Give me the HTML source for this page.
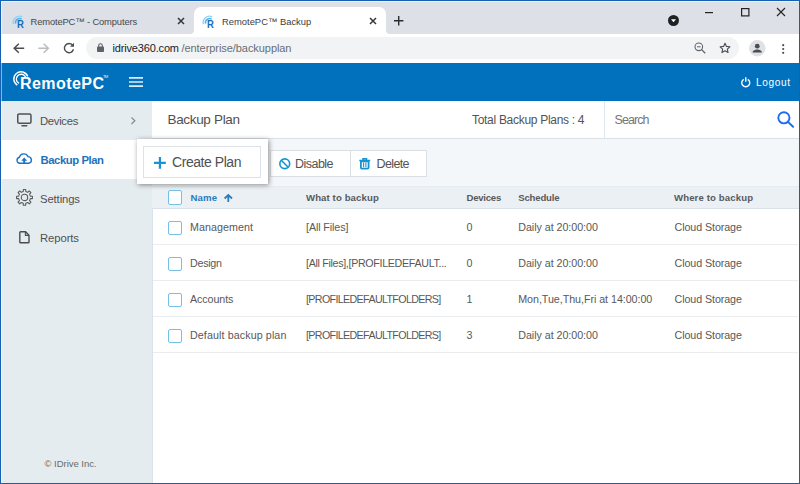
<!DOCTYPE html>
<html lang="en">
<head>
<meta charset="utf-8">
<title>RemotePC Backup</title>
<style>
*{box-sizing:border-box;margin:0;padding:0}
html,body{width:800px;height:484px;overflow:hidden;background:#fff}
body{font-family:"Liberation Sans",sans-serif;color:#333;position:relative}
.abs{position:absolute}
svg{position:absolute;overflow:visible}
.t{position:absolute;white-space:nowrap;line-height:1}
#frame{position:absolute;left:0;top:0;width:800px;height:484px;border:1px solid #1560b1;box-shadow:inset 1px 1px 0 rgba(255,255,255,.5);z-index:50;pointer-events:none}
#tabbar{left:0;top:0;width:800px;height:34px;background:#dde0e7}
#tab2{left:193.5px;top:7px;width:192.5px;height:27px;background:#fff;border-radius:7px 7px 0 0}
#toolbar{left:0;top:33.5px;width:800px;height:29px;background:#fff}
#pill{left:86px;top:37px;width:653px;height:22px;border-radius:11px;background:#f1f3f4}
#hdr{left:0;top:62.5px;width:800px;height:38px;background:#0171be}
#side{left:0;top:100.5px;width:152.5px;height:384px;background:#e5ecf0;border-right:1px solid #dae3ea}
#sel{left:0;top:139.5px;width:152px;height:39.5px;background:#fff}
#titlerow{left:152px;top:100.5px;width:648px;height:38px;background:#fff;border-bottom:1px solid #d9e0e7}
#actrow{left:152px;top:138.5px;width:648px;height:48px;background:#f4f7fa}
#thead{left:152px;top:186px;width:648px;height:22.5px;background:#ebf0f5;border-top:1px solid #e6ecf1;border-bottom:1px solid #d9e2ea}
.row{left:153px;width:645px;height:1px;background:#e9edf0}
.cb{position:absolute;left:168px;width:14px;height:14px;border:1px solid #76c0e6;border-radius:2px;background:#fff}
.btn{position:absolute;border:1px solid #d9dfe5;background:#fff}
</style>
</head>
<body>
<!-- browser chrome -->
<div class="abs" id="tabbar"></div>
<div class="abs" id="tab2"></div>
<svg style="left:189.5px;top:29px" width="4" height="5"><path d="M4 0V5H0A4 4 0 0 0 4 1Z" fill="#fff"/></svg>
<svg style="left:386px;top:29px" width="4" height="5"><path d="M0 0V5H4A4 4 0 0 1 0 1Z" fill="#fff"/></svg>
<div class="abs" id="toolbar"></div>
<div class="abs" id="pill"></div>
<span class="t" style="left:30.50px;top:16.84px;font-size:9.4px;color:#45494d;letter-spacing:-0.138px;">RemotePC™ - Computers</span>
<span class="t" style="left:222.00px;top:16.84px;font-size:9.4px;color:#3a3d41;letter-spacing:0.007px;">RemotePC™ Backup</span>
<span class="t" style="left:112.50px;top:42.99px;font-size:11px;color:#202124;letter-spacing:-0.165px;">idrive360.com</span>
<span class="t" style="left:181.50px;top:42.99px;font-size:11px;color:#6a6e73;letter-spacing:-0.062px;">/enterprise/backupplan</span>
<svg style="left:11.5px;top:14.5px" width="13" height="13" viewBox="0 0 13 13"><path d="M1.42 9.26A6.4 6.4 0 0 1 10.30 1.80" fill="none" stroke="#8fd2f6" stroke-width="1.4"/><path d="M3.64 8.66A4.1 4.1 0 0 1 9.65 4.05" fill="none" stroke="#52b3ec" stroke-width="1.5"/><text x="4.9" y="12.5" font-family="Liberation Sans, sans-serif" font-weight="bold" font-size="10.8" textLength="6.9" lengthAdjust="spacingAndGlyphs" fill="#1b6db8">R</text></svg>
<svg style="left:201.5px;top:14.5px" width="13" height="13" viewBox="0 0 13 13"><path d="M1.42 9.26A6.4 6.4 0 0 1 10.30 1.80" fill="none" stroke="#8fd2f6" stroke-width="1.4"/><path d="M3.64 8.66A4.1 4.1 0 0 1 9.65 4.05" fill="none" stroke="#52b3ec" stroke-width="1.5"/><text x="4.9" y="12.5" font-family="Liberation Sans, sans-serif" font-weight="bold" font-size="10.8" textLength="6.9" lengthAdjust="spacingAndGlyphs" fill="#1b6db8">R</text></svg>
<svg style="left:178px;top:18px" width="6" height="6"><path d="M0 0L6 6M6 0L0 6" stroke="#33373b" stroke-width="1.5" fill="none"/></svg>
<svg style="left:369.5px;top:18px" width="6" height="6"><path d="M0 0L6 6M6 0L0 6" stroke="#33373b" stroke-width="1.5" fill="none"/></svg>
<svg style="left:393.6px;top:16.3px" width="9.4" height="9.4"><path d="M4.7 0V9.4M0 4.7H9.4" stroke="#2a2d31" stroke-width="1.4" fill="none"/></svg>
<svg style="left:668px;top:15px" width="11" height="11"><circle cx="5.5" cy="5.5" r="5.5" fill="#202124"/><path d="M3 4.3H8L5.5 7.3Z" fill="#fff"/></svg>
<svg style="left:704.5px;top:11.5px" width="8" height="1"><rect width="8" height="1.2" fill="#222"/></svg>
<svg style="left:740.5px;top:8px" width="8.5" height="8.5"><rect x=".6" y=".6" width="7.3" height="7.3" fill="none" stroke="#222" stroke-width="1.2"/></svg>
<svg style="left:777px;top:8px" width="8" height="8"><path d="M0 0L8 8M8 0L0 8" stroke="#222" stroke-width="1.1" fill="none"/></svg>
<svg style="left:12.5px;top:42.6px" width="11.5" height="10.6" viewBox="0 0 11.5 10.6"><path d="M11.2 5.3H1.4M5.8 0.8L1.2 5.3L5.8 9.8" fill="none" stroke="#4a4d51" stroke-width="1.5"/></svg>
<svg style="left:37.8px;top:42.6px" width="11.5" height="10.6" viewBox="0 0 11.5 10.6"><path d="M0.3 5.3H10.1M5.7 0.8L10.3 5.3L5.7 9.8" fill="none" stroke="#b9bcc0" stroke-width="1.5"/></svg>
<svg style="left:63px;top:42px" width="12" height="12" viewBox="0 0 12 12"><path d="M9.6 3.2A4.6 4.6 0 1 0 10.5 7.3" fill="none" stroke="#4a4d51" stroke-width="1.4"/><path d="M11 0.8V4.8H7Z" fill="#4a4d51"/></svg>
<svg style="left:97px;top:43px" width="7" height="9" viewBox="0 0 7 9"><rect x="0" y="3.6" width="7" height="5.4" rx=".8" fill="#5f6368"/><path d="M1.7 4V2.5A1.8 1.8 0 0 1 5.3 2.5V4" fill="none" stroke="#5f6368" stroke-width="1.1"/></svg>
<svg style="left:693.5px;top:42px" width="12" height="12" viewBox="0 0 12 12"><circle cx="4.8" cy="4.8" r="3.8" fill="none" stroke="#5f6368" stroke-width="1.1"/><path d="M7.6 7.6L11.2 11.2" stroke="#5f6368" stroke-width="1.3"/><path d="M3 4.8H6.6" stroke="#5f6368" stroke-width="1"/></svg>
<svg style="left:719px;top:42px" width="12" height="12" viewBox="0 0 24 24"><path d="M12 2.5l2.9 6.3 6.9.8-5.1 4.7 1.4 6.8L12 17.7l-6.1 3.4 1.4-6.8L2.2 9.6l6.9-.8z" fill="none" stroke="#4a4d51" stroke-width="2.2" stroke-linejoin="round"/></svg>
<svg style="left:748.5px;top:39.5px" width="16.5" height="16.5" viewBox="0 0 16.5 16.5"><circle cx="8.25" cy="8.25" r="8.25" fill="#dee1e6"/><circle cx="8.25" cy="6.2" r="2.4" fill="#4a4d51"/><path d="M3.6 12.6C3.6 10.2 6.2 9.4 8.25 9.4S12.9 10.2 12.9 12.6Z" fill="#4a4d51"/></svg>
<svg style="left:781.5px;top:43.5px" width="2.4" height="10"><circle cx="1.2" cy="1.2" r="1.1" fill="#4a4d51"/><circle cx="1.2" cy="5" r="1.1" fill="#4a4d51"/><circle cx="1.2" cy="8.8" r="1.1" fill="#4a4d51"/></svg>
<div class="abs" id="hdr"></div>
<svg style="left:12px;top:69.5px" width="18" height="18" viewBox="0 0 18 18"><path d="M5.29 15.17A7.2 7.2 0 1 1 15.72 6.42" fill="none" stroke="#fff" stroke-width="1.4"/><path d="M6.98 13.47A4.9 4.9 0 1 1 13.53 6.80" fill="none" stroke="#fff" stroke-width="1.4"/></svg>
<span class="t" style="left:20.00px;top:75.66px;font-size:16px;color:#fff;letter-spacing:0.442px;font-weight:bold;">RemotePC</span>
<span class="t" style="left:103.00px;top:74.84px;font-size:4.2px;color:#e3f1fa;letter-spacing:-0.769px;">TM</span>
<svg style="left:129.2px;top:76.9px" width="14" height="11"><path d="M0 .9H14M0 5H14M0 9.1H14" stroke="#dcedf8" stroke-width="1.6"/></svg>
<svg style="left:740.6px;top:77.2px" width="9.5" height="9.8" viewBox="0 0 9.5 9.8"><path d="M2.7 2.3A4 4 0 1 0 6.8 2.3" fill="none" stroke="#fff" stroke-width="1.4"/><path d="M4.75 0.2V4.8" stroke="#fff" stroke-width="1.4"/></svg>
<span class="t" style="left:756.00px;top:77.75px;font-size:10.1px;color:#fff;letter-spacing:0.625px;">Logout</span>
<div class="abs" id="side"></div>
<div class="abs" id="sel"></div>
<svg style="left:17px;top:113px" width="15" height="14" viewBox="0 0 15 14"><rect x=".75" y=".9" width="13.2" height="9.4" rx="1.4" fill="none" stroke="#505050" stroke-width="1.5"/><rect x="4.4" y="11.9" width="6" height="1.5" rx=".4" fill="#505050"/></svg>
<span class="t" style="left:40.00px;top:116.23px;font-size:11.3px;color:#505050;letter-spacing:-0.313px;">Devices</span>
<svg style="left:131px;top:117px" width="5" height="7.5"><path d="M.5 .5L3.9 3.75L.5 7" fill="none" stroke="#80868b" stroke-width="1.1"/></svg>
<svg style="left:16px;top:153.4px" width="17" height="11" viewBox="0 0 17 11"><path d="M3.9 10.3A3.1 3.1 0 0 1 3.4 4.2A4.6 4.6 0 0 1 12 3.6A3.4 3.4 0 0 1 12.8 10.3Z" fill="none" stroke="#1f74c0" stroke-width="1.4" stroke-linejoin="round"/><path d="M8.2 4.4L11.2 7.7H9.2V10.3H7.2V7.7H5.2Z" fill="#1f74c0"/></svg>
<span class="t" style="left:40.50px;top:154.83px;font-size:11.3px;color:#1e72bc;letter-spacing:-0.430px;font-weight:bold;">Backup Plan</span>
<svg style="left:15.8px;top:189.4px" width="17" height="17" viewBox="0 0 17 17"><path d="M16.41 7.21L16.41 9.59L14.37 9.66L13.54 11.65L14.94 13.15L13.25 14.84L11.75 13.44L9.76 14.27L9.69 16.31L7.31 16.31L7.24 14.27L5.25 13.44L3.75 14.84L2.06 13.15L3.46 11.65L2.63 9.66L0.59 9.59L0.59 7.21L2.63 7.14L3.46 5.15L2.06 3.65L3.75 1.96L5.25 3.36L7.24 2.53L7.31 0.49L9.69 0.49L9.76 2.53L11.75 3.36L13.25 1.96L14.94 3.65L13.54 5.15L14.37 7.14Z" fill="none" stroke="#5a5a5a" stroke-width="1.1" stroke-linejoin="round"/><circle cx="8.5" cy="8.4" r="3.2" fill="none" stroke="#5a5a5a" stroke-width="1.1"/></svg>
<span class="t" style="left:40.00px;top:194.23px;font-size:11.3px;color:#505050;letter-spacing:-0.117px;">Settings</span>
<svg style="left:19px;top:230.8px" width="11" height="12.5" viewBox="0 0 11 12.5"><path d="M.8 1.6Q.8 .8 1.6 .8H6.6L10 4.2V10.9Q10 11.7 9.2 11.7H1.6Q.8 11.7 .8 10.9Z" fill="none" stroke="#4c4c4c" stroke-width="1.4"/><path d="M6.4 1V4.4H9.8" fill="none" stroke="#4c4c4c" stroke-width="1.1"/></svg>
<span class="t" style="left:40.00px;top:233.23px;font-size:11.3px;color:#505050;letter-spacing:-0.093px;">Reports</span>
<span class="t" style="left:44.50px;top:458.96px;font-size:9.5px;color:#6a6a6a;letter-spacing:-0.033px;">© IDrive Inc.</span>
<div class="abs" id="titlerow"></div>
<span class="t" style="left:167.50px;top:112.57px;font-size:13.5px;color:#505050;letter-spacing:-0.330px;">Backup Plan</span>
<span class="t" style="left:472.00px;top:113.84px;font-size:12px;color:#535353;letter-spacing:-0.297px;">Total Backup Plans : 4</span>
<div class="abs" style="left:604px;top:100.5px;width:1px;height:38px;background:#dfe6ed"></div>
<span class="t" style="left:614.50px;top:114.42px;font-size:12.5px;color:#767676;letter-spacing:-0.921px;">Search</span>
<svg style="left:777px;top:111.2px" width="17" height="17" viewBox="0 0 17 17"><circle cx="6.9" cy="6.8" r="5.6" fill="none" stroke="#1a6ef0" stroke-width="1.9"/><path d="M11 10.9L16.1 15.8" stroke="#1a6ef0" stroke-width="2" stroke-linecap="round"/></svg>
<div class="abs" id="actrow"></div>
<div class="btn" style="left:270px;top:150px;width:81px;height:27px"></div>
<div class="btn" style="left:350px;top:150px;width:77px;height:27px"></div>
<svg style="left:278.5px;top:158px" width="11.5" height="11.5" viewBox="0 0 11.5 11.5"><circle cx="5.75" cy="5.75" r="4.9" fill="none" stroke="#1793d1" stroke-width="1.6"/><path d="M2.3 2.3L9.2 9.2" stroke="#1793d1" stroke-width="1.6"/></svg>
<span class="t" style="left:295.00px;top:158.42px;font-size:12.5px;color:#535353;letter-spacing:-0.531px;">Disable</span>
<svg style="left:359px;top:158px" width="11.5" height="11.5" viewBox="0 0 11.5 11.5"><path d="M0.3 2.4H11.2M4 2.3V.7H7.5V2.3" fill="none" stroke="#1793d1" stroke-width="1.5"/><path d="M1.9 3.4H9.6V9.4Q9.6 10.6 8.4 10.6H3.1Q1.9 10.6 1.9 9.4Z" fill="#fff" stroke="#1793d1" stroke-width="1.8"/><path d="M4.6 4.6V9.2M6.9 4.6V9.2" stroke="#1793d1" stroke-width="1.1"/></svg>
<span class="t" style="left:376.50px;top:158.42px;font-size:12.5px;color:#535353;letter-spacing:-0.627px;">Delete</span>
<div class="abs" id="thead"></div>
<div class="cb" style="top:190px;height:14.5px"></div>
<span class="t" style="left:190.50px;top:193.17px;font-size:9.6px;color:#2c7cba;letter-spacing:0.123px;font-weight:bold;">Name</span>
<svg style="left:223.8px;top:193.6px" width="8.6" height="8" viewBox="0 0 8.6 8"><path d="M4.3 8V1M.6 4.5L4.3 .9L8 4.5" fill="none" stroke="#2a7db8" stroke-width="1.8"/></svg>
<span class="t" style="left:306.00px;top:193.17px;font-size:9.6px;color:#585a5c;letter-spacing:0.102px;font-weight:bold;">What to backup</span>
<span class="t" style="left:466.50px;top:193.17px;font-size:9.6px;color:#585a5c;letter-spacing:-0.254px;font-weight:bold;">Devices</span>
<span class="t" style="left:518.25px;top:193.17px;font-size:9.6px;color:#585a5c;letter-spacing:-0.200px;font-weight:bold;">Schedule</span>
<span class="t" style="left:674.00px;top:193.17px;font-size:9.6px;color:#585a5c;letter-spacing:0.122px;font-weight:bold;">Where to backup</span>
<div class="abs row" style="top:244px"></div>
<div class="abs row" style="top:280px"></div>
<div class="abs row" style="top:316px"></div>
<div class="abs row" style="top:352px"></div>
<div class="cb" style="top:221px"></div>
<span class="t" style="left:190.00px;top:221.84px;font-size:10.7px;color:#585858;letter-spacing:0.058px;">Management</span>
<span class="t" style="left:306.00px;top:221.84px;font-size:10.7px;color:#585858;letter-spacing:-0.091px;">[All Files]</span>
<span class="t" style="left:466.50px;top:221.84px;font-size:10.7px;color:#585858;">0</span>
<span class="t" style="left:518.25px;top:221.84px;font-size:10.7px;color:#585858;letter-spacing:-0.036px;">Daily at 20:00:00</span>
<span class="t" style="left:674.50px;top:221.84px;font-size:10.7px;color:#585858;letter-spacing:-0.077px;">Cloud Storage</span>
<div class="cb" style="top:257px"></div>
<span class="t" style="left:190.00px;top:257.84px;font-size:10.7px;color:#585858;letter-spacing:-0.263px;">Design</span>
<span class="t" style="left:306.00px;top:257.84px;font-size:10.7px;color:#585858;letter-spacing:-0.320px;">[All Files],[PROFILEDEFAULT...</span>
<span class="t" style="left:466.50px;top:257.84px;font-size:10.7px;color:#585858;">0</span>
<span class="t" style="left:518.25px;top:257.84px;font-size:10.7px;color:#585858;letter-spacing:-0.036px;">Daily at 20:00:00</span>
<span class="t" style="left:674.50px;top:257.84px;font-size:10.7px;color:#585858;letter-spacing:-0.077px;">Cloud Storage</span>
<div class="cb" style="top:293px"></div>
<span class="t" style="left:190.00px;top:293.84px;font-size:10.7px;color:#585858;letter-spacing:-0.075px;">Accounts</span>
<span class="t" style="left:306.00px;top:293.84px;font-size:10.7px;color:#585858;letter-spacing:-0.644px;">[PROFILEDEFAULTFOLDERS]</span>
<span class="t" style="left:466.50px;top:293.84px;font-size:10.7px;color:#585858;">1</span>
<span class="t" style="left:518.25px;top:293.84px;font-size:10.7px;color:#585858;letter-spacing:-0.038px;">Mon,Tue,Thu,Fri at 14:00:00</span>
<span class="t" style="left:674.50px;top:293.84px;font-size:10.7px;color:#585858;letter-spacing:-0.077px;">Cloud Storage</span>
<div class="cb" style="top:329px"></div>
<span class="t" style="left:190.00px;top:329.84px;font-size:10.7px;color:#585858;letter-spacing:0.105px;">Default backup plan</span>
<span class="t" style="left:306.00px;top:329.84px;font-size:10.7px;color:#585858;letter-spacing:-0.644px;">[PROFILEDEFAULTFOLDERS]</span>
<span class="t" style="left:466.50px;top:329.84px;font-size:10.7px;color:#585858;">3</span>
<span class="t" style="left:518.25px;top:329.84px;font-size:10.7px;color:#585858;letter-spacing:-0.036px;">Daily at 20:00:00</span>
<span class="t" style="left:674.50px;top:329.84px;font-size:10.7px;color:#585858;letter-spacing:-0.077px;">Cloud Storage</span>
<div class="abs" style="left:137px;top:138.5px;width:131px;height:45px;background:#fff;box-shadow:1px 1px 5px rgba(0,0,0,.45)"></div>
<div class="btn" style="left:143px;top:145.5px;width:118px;height:32px;border-color:#dce2e7"></div>
<svg style="left:153.7px;top:157px" width="11.8" height="11.8"><path d="M5.9 0V11.8M0 5.9H11.8" stroke="#1793d1" stroke-width="2.2"/></svg>
<span class="t" style="left:172.00px;top:155.15px;font-size:14px;color:#505050;letter-spacing:-0.443px;">Create Plan</span>
<div id="frame"></div>
</body>
</html>
